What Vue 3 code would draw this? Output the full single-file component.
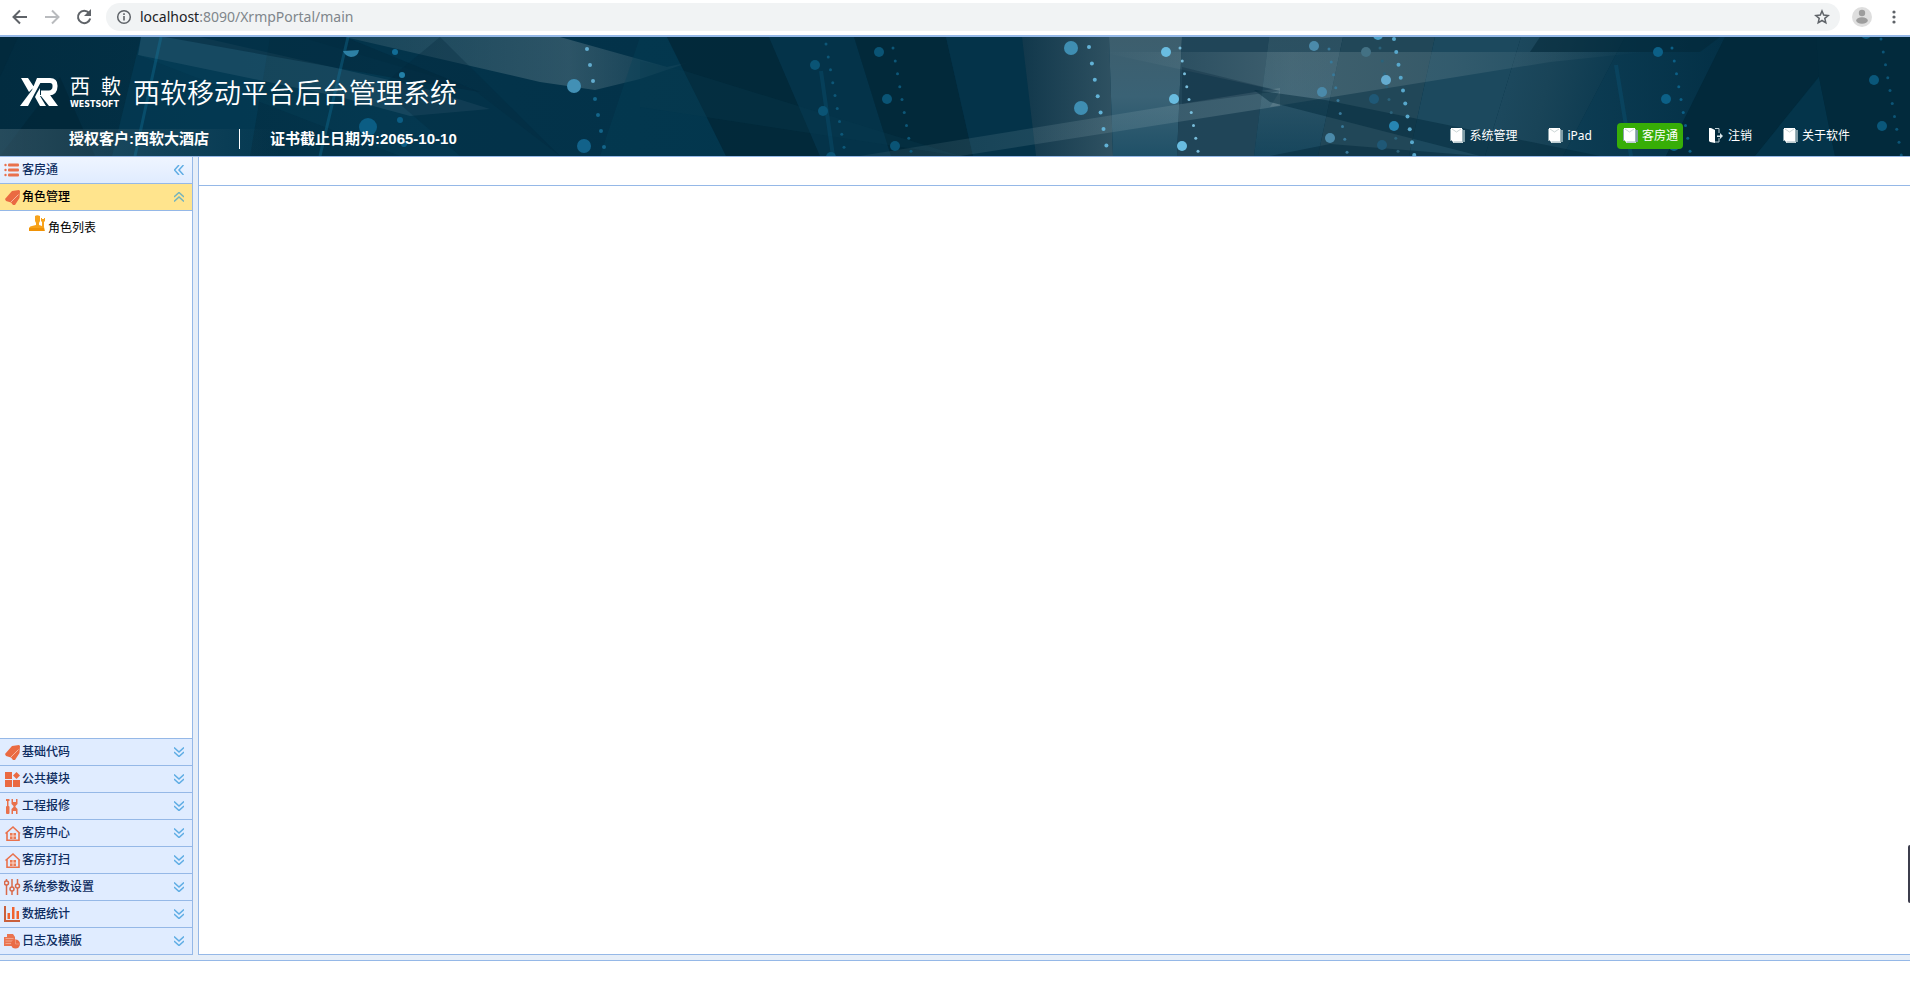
<script setup>
import { ref } from 'vue'

const icons = {
  list: '<g fill="#e9714c"><circle cx="1.5" cy="3" r="1.2"/><circle cx="1.5" cy="8" r="1.2"/><circle cx="1.5" cy="13" r="1.2"/><rect x="4" y="1.5" width="11" height="3" rx="1"/><rect x="4" y="6.5" width="11" height="3" rx="1"/><rect x="4" y="11.5" width="11" height="3" rx="1"/></g>',
  tag: '<path d="M8 2 15 1 16 2 15.5 9 11 16 9 16 7 13.500 2 12 1 10z" fill="#ea6a42"/><path d="M7 13 14.500 5.500" stroke="#f5b59e" stroke-width="1" fill="none"/>',
  blocks: '<g fill="#ea6a42"><rect x="1" y="1" width="7" height="7"/><rect x="1" y="9" width="7" height="7"/><rect x="9" y="9" width="7" height="7"/><path d="M12.500 1 16 4.500 12.500 8 9 4.500z"/></g>',
  tools: '<g fill="#e9714c"><path d="M3 1h1.500v7H3z"/><path d="M2 1h3.500v2H2z"/><rect x="2" y="8" width="3.500" height="8" rx="1"/><path d="M7.500 1H9v3h3V1h1.500v5l-2 2v1l2 2v5H12v-3H9v3H7.500v-5l2-2V8l-2-2z"/></g>',
  house: '<g fill="none" stroke="#e9714c" stroke-width="1.600"><path d="M1.500 8.500 9 2l7 6.500M3 7.500V15.200h12V7.500"/></g><path d="M6 8h6v6H6z" fill="#e97a56"/><path d="M9 8v6M6 11h6" stroke="#fbd9cd" stroke-width="1"/>',
  sliders: '<g fill="none" stroke="#d9694a" stroke-width="1.500"><path d="M2.500 0v2M2.500 6v10M8 0v8M8 12v4M13.500 0v5M13.500 9v7"/><circle cx="2.500" cy="4" r="2"/><circle cx="8" cy="10" r="2"/><circle cx="13.500" cy="7" r="2"/></g>',
  chart: '<path d="M1 0v15h15" fill="none" stroke="#c9603c" stroke-width="2"/><path d="M3.500 7h2.500v6H3.500zM8 1h2.500v12H8zM12.500 5H15v8h-2.500z" fill="#f0622f"/>',
  log: '<path d="M3 1h6l2 3v9H0V4h3z" fill="#ea7450"/><path d="M1.500 5.500h8M1.500 8h8M1.500 10.500h7" stroke="#f2a58d"/><circle cx="11.500" cy="11" r="4.500" fill="#e96b46"/><path d="M11.500 11V7M11.500 11h4" stroke="#f2a58d" stroke-width="0.700"/>',
  page: '<path d="M13 2h3v12h-3z" fill="#7f9ca6"/><path d="M4 3h10v12H4z" fill="#dfe7e9"/><path d="M2 0h11v14H4L2 12z" fill="#fff"/><path d="M3 1 7.500 4 12 1" stroke="#ccd6d6" fill="none"/><path d="M13.500 1v13H4.500" fill="none" stroke="#9db3ba"/><path d="M1 1h1v12H1z" fill="#8aa3ab"/>',
  exit: '<path d="M7 0.500h4V5M11 10v4H7" fill="none" stroke="#b9cbd2"/><path d="M1 0h2l4 2v13l-5-1-1-1z" fill="#fff"/><path d="M9 7.500h3V5l3 3-3 3V9H9z" fill="#dce8ec"/>',
}

const links = [
  { label: '系统管理', icon: 'page' },
  { label: 'iPad', icon: 'page' },
  { label: '客房通', icon: 'page' },
  { label: '注销', icon: 'exit' },
  { label: '关于软件', icon: 'page' },
]
const current = ref('客房通')

const groups = [
  { label: '基础代码', icon: 'tag' },
  { label: '公共模块', icon: 'blocks' },
  { label: '工程报修', icon: 'tools' },
  { label: '客房中心', icon: 'house' },
  { label: '客房打扫', icon: 'house' },
  { label: '系统参数设置', icon: 'sliders' },
  { label: '数据统计', icon: 'chart' },
  { label: '日志及模版', icon: 'log' },
]

const facets = [
  ['0,0 18,0 0,40', '#02283a', 0.5],
  ['0,119 60,40 95,119', '#01202f', 0.4],
  ['141,0 270,0 250,119 112,119', '#04405c', 0.5],
  ['141,0 300,0 470,50 560,119 400,119 138,18', '#0b4a63', 0.2],
  ['141,0 200,0 420,50 490,72 410,79 340,60 138,18', '#5d8494', 0.2],
  ['165,0 345,0 480,55 400,42', '#02283b', 0.5],
  ['345,0 560,0 667,30 690,25 640,42 595,53 540,45', 'url(#cloud)', 1],
  ['440,0 560,119 460,119 380,50', '#02283a', 0.3],
  ['640,0 667,0 726,119 600,119', '#05415a', 0.35],
  ['667,0 769,0 820,119 726,119', '#022838', 0.85],
  ['769,0 854,0 891,119 820,119', '#05354a', 0.7],
  ['854,0 946,0 973,119 891,119', '#022838', 0.85],
  ['946,0 1022,0 1036,119 973,119', '#043349', 1],
  ['1022,0 1109,0 1113,119 1036,119', 'url(#steel)', 0.8],
  ['1109,0 1182,0 1177,119 1113,119', 'url(#glow)', 1],
  ['1182,0 1269,0 1254,119 1177,119', '#24485b', 0.9],
  ['1269,0 1343,0 1318,119 1254,119', 'url(#glow)', 0.7],
  ['1343,0 1435,0 1409,119 1318,119', '#254a5b', 0.9],
  ['1435,0 1521,0 1485,119 1409,119', '#1f4d62', 0.9],
  ['1521,0 1625,0 1563,119 1485,119', 'url(#fade)', 1],
  ['1625,0 1725,0 1666,119 1563,119', 'url(#dusk)', 1],
  ['1725,0 1850,0 1755,119 1666,119', '#02293b', 1],
  ['1819,40 1755,119 1835,119', '#04344a', 1],
  ['1819,40 1816,0 1910,0 1910,119 1835,119', '#022a3c', 1],
  ['640,24 685,34 960,119 640,70', '#0b3c50', 0.3],
  ['860,119 1280,51 1280,69 960,119', 'url(#beam)', 1],
  ['1101,15 1645,15 1550,25 1270,70 1280,54', 'url(#ray)', 1],
  ['1182,30 1280,54 1182,67', '#0d2f42', 0.35],
  ['1254,53 1325,63 1600,119 1480,119 1270,65', '#02293c', 0.5],
  ['1270,119 1330,107 1480,119', '#03293b', 0.5],
]

const chain = (x, y, count, dx, dy, r, color) =>
  Array.from({ length: count }, (_, i) => ({ x: x + i * dx, y: y + i * dy, r, color }))

const bubbles = [
  ...chain(395, 15, 1, 0, 0, 3, '#116c96'),
  ...chain(402, 38, 1, 0, 0, 3, '#2280a8'),
  ...chain(368, 90, 1, 0, 0, 9, '#0b5d84'),
  ...chain(400, 83, 1, 0, 0, 3, '#0b5d84'),
  ...chain(404, 107, 1, 0, 0, 3, '#0b5d84'),
  ...chain(587, 12, 3, 3, 16, 2, '#62acce'),
  ...chain(595, 62, 4, 3, 16, 2, '#14658a'),
  ...chain(574, 49, 1, 0, 0, 7, '#4290b5'),
  ...chain(584, 109, 1, 0, 0, 7, '#12628a'),
  ...chain(815, 28, 3, 8, 46, 5, '#0a5475'),
  ...chain(826, 7, 9, 2.25, 12.9, 1.5, '#0d5778'),
  ...chain(879, 15, 3, 8, 47, 5, '#0a5475'),
  ...chain(893, 11, 9, 2.25, 12.9, 1.5, '#0d5778'),
  ...chain(1071, 11, 2, 10, 60, 7, '#3f8eb2'),
  ...chain(1089, 10, 7, 2.9, 16.4, 2, '#62b2d6'),
  ...chain(1166, 15, 3, 8, 47, 5, '#69bce0'),
  ...chain(1180, 11, 9, 2.25, 12.9, 1.5, '#78bddb'),
  ...chain(1314, 9, 3, 8, 46, 5, '#4b8aaa'),
  ...chain(1329, 12, 9, 2.25, 12.9, 1.5, '#38799a'),
  ...chain(1366, 15, 1, 0, 0, 5, '#437184'),
  ...chain(1374, 62, 2, 8, 46, 5, '#1f5876'),
  ...chain(1380, 11, 9, 2.25, 12.9, 1.5, '#2b627a'),
  ...chain(1378, -2, 1, 0, 0, 5, '#4ca0c6'),
  ...chain(1386, 43, 1, 0, 0, 5, '#65acd0'),
  ...chain(1394, 89, 1, 0, 0, 5, '#2785b2'),
  ...chain(1394, 2, 10, 2.25, 12.9, 2, '#58a8cc'),
  ...chain(1658, 15, 3, 8, 47, 5, '#0c6087'),
  ...chain(1672, 11, 9, 2.25, 12.9, 1.5, '#0c6087'),
  ...chain(1866, -3, 4, 8, 46, 5, '#0a577a'),
  ...chain(1881, 2, 10, 2.25, 12.9, 1.5, '#0c5577'),
]
</script>

<template>
  <div class="page">
    <div class="browser">
      <button class="tool" aria-label="后退">
        <svg width="16" height="16" viewBox="0 0 16 16"><path d="M15 8H2M8 1.500 1.500 8 8 14.500" fill="none" stroke="#5f6368" stroke-width="2" /></svg>
      </button>
      <button class="tool" aria-label="前进">
        <svg width="16" height="16" viewBox="0 0 16 16"><path d="M1 8h13M8 1.500 14.500 8 8 14.500" fill="none" stroke="#b9bbbe" stroke-width="2" /></svg>
      </button>
      <button class="tool" aria-label="刷新">
        <svg width="16" height="16" viewBox="0 0 16 16"><path d="M13 4A6.200 6.200 0 1 0 14.200 9.500" fill="none" stroke="#5f6368" stroke-width="2" /><path d="M15 0v7H8z" fill="#5f6368" /></svg>
      </button>
      <div class="address">
        <svg width="16" height="16" viewBox="0 0 16 16"><circle cx="8" cy="8" r="6.300" fill="none" stroke="#5f6368" stroke-width="1.500" /><path d="M7.200 7h1.600v4.500H7.200zM7.200 4.300h1.600v1.600H7.200z" fill="#5f6368" /></svg>
        <div class="url" role="textbox" tabindex="0" aria-label="地址"><span class="host">localhost</span>:8090/XrmpPortal/main</div>
        <button class="star" aria-label="收藏">
          <svg width="16" height="16" viewBox="0 0 16 16"><path d="M8 2 9.700 6.100 14.200 6.500 10.800 9.400 11.800 13.800 8 11.500 4.200 13.800 5.200 9.400 1.800 6.500 6.300 6.100z" fill="none" stroke="#5f6368" stroke-width="1.500" /></svg>
        </button>
      </div>
      <button class="avatar" aria-label="用户">
        <svg width="20" height="20" viewBox="0 0 20 20"><circle cx="10" cy="10" r="10" fill="#dedede" /><circle cx="10" cy="6" r="3.200" fill="#9d9d9d" /><ellipse cx="10" cy="13.500" rx="5.800" ry="3.300" fill="#9d9d9d" /></svg>
      </button>
      <button class="more" aria-label="更多">
        <svg width="4" height="14" viewBox="0 0 4 14"><g fill="#5f6368"><circle cx="2" cy="2" r="1.600" /><circle cx="2" cy="7" r="1.600" /><circle cx="2" cy="12" r="1.600" /></g></svg>
      </button>
    </div>

    <header class="banner">
      <svg class="backdrop" viewBox="0 0 1910 119" preserveAspectRatio="none" aria-hidden="true">
        <defs>
          <linearGradient id="steel"><stop offset="0" stop-color="#153a4d" /><stop offset="1" stop-color="#3a5a69" /></linearGradient>
          <linearGradient id="glow" x2="0" y2="1"><stop offset="0" stop-color="#3d5e6d" /><stop offset="0.500" stop-color="#3a6275" /><stop offset="1" stop-color="#1f5067" /></linearGradient>
          <linearGradient id="fade" x2="1" y2="0.200"><stop offset="0" stop-color="#1f4c62" /><stop offset="0.500" stop-color="#194458" /><stop offset="1" stop-color="#0b394f" /></linearGradient>
          <linearGradient id="dusk" y2="0"><stop offset="0" stop-color="#0d3d54" /><stop offset="1" stop-color="#033046" /></linearGradient>
          <linearGradient id="base"><stop offset="0" stop-color="#022c40" /><stop offset="0.200" stop-color="#03344b" /><stop offset="0.400" stop-color="#033148" /><stop offset="1" stop-color="#022b3e" /></linearGradient>
          <linearGradient id="haze"><stop offset="0" stop-color="#52717f" stop-opacity="0.450" /><stop offset="1" stop-color="#52717f" stop-opacity="0" /></linearGradient>
          <linearGradient id="cloud"><stop offset="0" stop-color="#6b8792" stop-opacity="0.200" /><stop offset="0.650" stop-color="#6b8792" stop-opacity="0.400" /><stop offset="1" stop-color="#6b8792" stop-opacity="0.100" /></linearGradient>
          <linearGradient id="beam"><stop offset="0" stop-color="#86a2ab" stop-opacity="0.100" /><stop offset="1" stop-color="#86a2ab" stop-opacity="0.300" /></linearGradient>
          <linearGradient id="ray"><stop offset="0" stop-color="#8ba2a8" stop-opacity="0" /><stop offset="0.350" stop-color="#8ba2a8" stop-opacity="0.280" /><stop offset="0.650" stop-color="#8ba2a8" stop-opacity="0.200" /><stop offset="1" stop-color="#8ba2a8" stop-opacity="0" /></linearGradient>
        </defs>
        <rect width="1910" height="119" fill="url(#base)" />
        <polygon v-for="(f, i) in facets" :key="i" :points="f[0]" :fill="f[1]" :fill-opacity="f[2]" />
        <rect y="92" width="280" height="27" fill="url(#haze)" />
        <polygon points="1540,0 1720,0 1700,15 1530,15" fill="#022536" fill-opacity="0.500" />
        <path d="M161 0 135 119M348 0 320 119" stroke="#1582ad" stroke-width="3" stroke-opacity="0.300" />
        <path d="M821 34 833 119M1616 28 1631 119" stroke="#0d628b" stroke-width="4" stroke-opacity="0.250" />
        <path d="M343 14 359 13Q358 20 351 20 345 19 343 14z" fill="#2d80a5" />
        <circle v-for="(b, i) in bubbles" :key="'b' + i" :cx="b.x" :cy="b.y" :r="b.r" :fill="b.color" />
      </svg>

      <div class="brand">
        <svg class="mark" width="38" height="28" viewBox="0 0 38 28" aria-label="XR">
          <path d="M1 0h7l6 9-5 5zM17 0h6L8 28H0L12 12z" fill="#fff" />
          <path d="M18 2.500h12q5 0 5 5v1q0 6-6 6.500h-8" fill="none" stroke="#fff" stroke-width="5" />
          <path d="M17 15l3-5v7l10 0 8 11h-9l-8-10-1 0 6 10h-6l-5-9z" fill="#fff" />
        </svg>
        <div class="company">
          <div class="company-cn"><span>西</span><span>軟</span></div>
          <div class="company-en">WESTSOFT</div>
        </div>
        <h1>西软移动平台后台管理系统</h1>
      </div>
      <div class="info">
        <div class="license">
          <span>授权客户:西软大酒店</span>
          <span class="expiry">证书截止日期为:2065-10-10</span>
        </div>
        <nav class="links">
          <button v-for="l in links" :key="l.label" :class="['link', { active: current === l.label }]" @click="current = l.label">
            <svg width="16" height="16" viewBox="0 0 16 16" v-html="icons[l.icon]" />
            {{ l.label }}
          </button>
        </nav>
      </div>
    </header>

    <div class="workspace">
      <aside class="sidebar">
        <div class="row heading">
          <svg class="row-icon" width="17" height="17" viewBox="0 0 17 17" v-html="icons.list" />
          <span>客房通</span>
          <button class="collapse" aria-label="收起">
            <svg width="10" height="10" viewBox="0 0 10 10"><path d="M5 0 0.500 5 5 10M9.500 0 5 5l4.500 5" class="arrow" /></svg>
          </button>
        </div>
        <button class="row open">
          <svg class="row-icon" width="17" height="17" viewBox="0 0 17 17" v-html="icons.tag" />
          <span>角色管理</span>
          <svg class="chevron" width="10" height="10" viewBox="0 0 10 10"><path d="M0 5 5 0.500 10 5M0 9.500 5 5l5 4.500" class="arrow" /></svg>
        </button>
        <div class="panel">
          <a class="leaf" href="#">
            <svg width="17" height="17" viewBox="0 0 17 17"><path d="M6 1q2-1.500 5 0v5l-1 2v2l3 1V7l-1-1V3h1v1h2V3h1v3l-1 1v5l1 4H0v-3q1-2 3-2l4-1V8L6 6z" fill="#f7a21a" /><path d="M0 13h15v3H0z" fill="#f09206" /></svg>
            <span>角色列表</span>
          </a>
        </div>
        <button v-for="g in groups" :key="g.label" class="row">
          <svg class="row-icon" width="17" height="17" viewBox="0 0 17 17" v-html="icons[g.icon]" />
          <span>{{ g.label }}</span>
          <svg class="chevron" width="10" height="10" viewBox="0 0 10 10"><path d="M0 0.500 5 5l5-4.500M0 5l5 4.500L10 5" class="arrow" /></svg>
        </button>
      </aside>
      <main class="content">
        <div class="tabs"></div>
      </main>
    </div>
    <div class="strip"></div>
    <div class="handle"></div>
  </div>
</template>

<style>
body {
  background: #fff;
}
</style>

<style scoped>
.page {
  position: relative;
  display: flex;
  flex-direction: column;
  height: 100vh;
  padding-bottom: 23px;
  box-sizing: border-box;
  overflow: hidden;
  font: 12px/16px "Liberation Sans", "Noto Sans CJK SC", sans-serif;
}
button {
  border: 0;
  padding: 0;
  background: none;
  font: inherit;
  color: inherit;
}
svg {
  display: block;
  flex: none;
}
.browser {
  display: flex;
  align-items: center;
  height: 35px;
  box-sizing: border-box;
  padding: 0 14px 1px 12px;
}
.tool {
  margin-right: 16px;
}
.address {
  flex: 1;
  display: flex;
  align-items: center;
  height: 28px;
  margin-left: -2px;
  padding: 0 10px;
  border-radius: 14px;
  background: #f1f3f4;
}
.url {
  flex: 1;
  margin-left: 8px;
  padding-bottom: 1px;
  font: 14px/20px "Noto Sans", sans-serif;
  color: #80868b;
}
.host {
  color: #202124;
}
.avatar {
  margin: 0 20px 0 12px;
}
.banner {
  position: relative;
  display: flex;
  flex-direction: column;
  justify-content: space-between;
  box-sizing: border-box;
  height: 122px;
  padding: 35px 55px 7px 20px;
  border-top: 2px solid #95b8e7;
  border-bottom: 1px solid #95b8e7;
  background: #022c40;
  color: #fff;
}
.backdrop {
  position: absolute;
  inset: 0;
  width: 100%;
  height: 100%;
}
.brand,
.info {
  position: relative;
  display: flex;
}
.brand {
  align-items: center;
  height: 40px;
}
.company {
  width: 51px;
  margin-left: 12px;
}
.company-cn {
  display: flex;
  justify-content: space-between;
  font: 400 20px/20px "Noto Sans CJK SC", sans-serif;
}
.company-en {
  margin-top: 5px;
  font: bold 8px/8px "DejaVu Sans", sans-serif;
}
h1 {
  margin: 0 0 0 12px;
  font: 350 27px/36px "Noto Sans CJK SC", sans-serif;
}
.info {
  align-items: flex-end;
  justify-content: space-between;
  height: 26px;
}
.license {
  display: flex;
  padding-left: 49px;
  font-size: 15px;
  font-weight: bold;
  line-height: 20px;
}
.expiry {
  margin-left: 30px;
  padding-left: 30px;
  border-left: 1px solid #fff;
}
.links {
  display: flex;
  gap: 20px;
}
.link {
  display: flex;
  align-items: center;
  gap: 4px;
  height: 26px;
  padding: 0 5px;
  border-radius: 4px;
  font-family: "Noto Sans", "Noto Sans CJK SC", sans-serif;
}
.link.active {
  background: #37ae07;
}
.workspace {
  flex: 1;
  display: flex;
  gap: 5px;
  min-height: 0;
  background: #e6eef8;
}
.sidebar {
  display: flex;
  flex-direction: column;
  width: 192px;
  border-right: 1px solid #95b8e7;
  background: #fff;
}
.row {
  display: flex;
  align-items: center;
  flex: none;
  height: 27px;
  box-sizing: border-box;
  padding: 0 8px 0 4px;
  border-bottom: 1px solid #95b8e7;
  background: #e0ecff;
  color: #0e2d5f;
  font-weight: 500;
  font-family: "Noto Sans CJK SC", sans-serif;
  text-align: left;
}
.row span {
  flex: 1;
  margin-left: 1px;
  padding-bottom: 2px;
}
.heading {
  background: linear-gradient(#eff5ff, #e0ecff);
}
.open {
  background: #ffe48d;
  color: #000;
}
.arrow {
  fill: none;
  stroke: #5fade4;
  stroke-width: 1.5;
}
.open .arrow {
  stroke: #75b3bd;
}
.panel {
  flex: 1;
  min-height: 0;
  border-bottom: 1px solid #95b8e7;
}
.leaf {
  display: flex;
  align-items: flex-start;
  gap: 2px;
  padding: 4px 0 0 29px;
  color: #000;
  text-decoration: none;
}
.leaf span {
  margin-top: 5px;
}
.content {
  flex: 1;
  border: 1px solid #95b8e7;
  border-top: 0;
  border-right: 0;
  background: #fff;
}
.tabs {
  height: 28px;
  border-bottom: 1px solid #95b8e7;
}
.strip {
  height: 5px;
  border-bottom: 1px solid #95b8e7;
  background: #e6eef8;
}
.handle {
  position: absolute;
  right: 0;
  bottom: 81px;
  width: 2px;
  height: 58px;
  border-radius: 2px 0 0 2px;
  background: #3c3d4c;
}
</style>
